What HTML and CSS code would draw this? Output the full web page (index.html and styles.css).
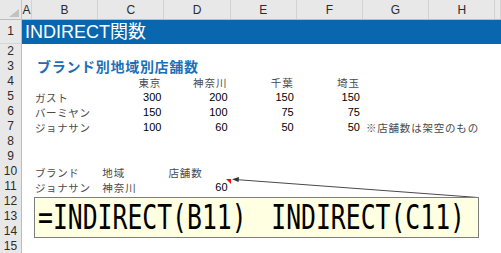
FILE: index.html
```html
<!DOCTYPE html>
<html lang="ja">
<head>
<meta charset="utf-8">
<title>INDIRECT関数</title>
<link rel="stylesheet" href="styles.css">
</head>
<body>
<div class="sheet">
  <div class="row colhead">
    <div class="corner"></div>
    <div class="ch">A</div><div class="ch">B</div><div class="ch">C</div><div class="ch">D</div>
    <div class="ch">E</div><div class="ch">F</div><div class="ch">G</div><div class="ch">H</div><div class="ch"></div>
  </div>
  <div class="row r1">
    <div class="rh">1</div>
    <div class="band"><span class="title">INDIRECT関数</span></div>
  </div>
  <div class="row"><div class="rh">2</div></div>
  <div class="row"><div class="rh">3</div><div></div><div class="c sub">ブランド別地域別店舗数</div></div>
  <div class="row"><div class="rh">4</div><div></div><div></div>
    <div class="c r jp">東京</div><div class="c r jp">神奈川</div><div class="c r jp">千葉</div><div class="c r jp">埼玉</div></div>
  <div class="row"><div class="rh">5</div><div></div><div class="c jp kana">ガスト</div>
    <div class="c r n">300</div><div class="c r n">200</div><div class="c r n">150</div><div class="c r n">150</div></div>
  <div class="row"><div class="rh">6</div><div></div><div class="c jp kana">バーミヤン</div>
    <div class="c r n">150</div><div class="c r n">100</div><div class="c r n">75</div><div class="c r n">75</div></div>
  <div class="row"><div class="rh">7</div><div></div><div class="c jp kana">ジョナサン</div>
    <div class="c r n">100</div><div class="c r n">60</div><div class="c r n">50</div><div class="c r n">50</div>
    <div class="c jp note">※店舗数は架空のもの</div></div>
  <div class="row"><div class="rh">8</div></div>
  <div class="row"><div class="rh">9</div></div>
  <div class="row"><div class="rh">10</div><div></div><div class="c jp kana">ブランド</div>
    <div class="c jp">地域</div><div class="c jp">店舗数</div></div>
  <div class="row"><div class="rh">11</div><div></div><div class="c jp kana">ジョナサン</div>
    <div class="c jp">神奈川</div><div class="c r n commented">60</div></div>
  <div class="row"><div class="rh">12</div></div>
  <div class="row"><div class="rh">13</div></div>
  <div class="row"><div class="rh">14</div></div>
  <div class="row"><div class="rh">15</div></div>

  <svg class="leader" width="501" height="253" viewBox="0 0 501 253">
    <line x1="235" y1="179.5" x2="478" y2="197.5" stroke="#4a4a4a" stroke-width="1"/>
    <polygon points="232,179.3 239,177 238.6,182" fill="#333"/>
  </svg>
  <div class="callout"><span class="formula">=INDIRECT(B11) INDIRECT(C11)</span></div>
</div>
</body>
</html>
```
FILE: styles.css
```css
html, body {
  margin: 0;
  padding: 0;
  background: #ffffff;
}
.sheet {
  --cols: 22px 10px repeat(7, 66.2px) 1fr;
  position: relative;
  width: 501px;
  height: 253px;
  overflow: hidden;
  font-family: "Liberation Sans", Arial, "Noto Sans CJK JP", sans-serif;
  font-size: 11px;
  line-height: 15px;
  color: #000;
}
.row {
  display: grid;
  grid-template-columns: var(--cols);
  height: 15px;
  white-space: nowrap;
}
.colhead {
  height: 20px;
  background: #e8e8e8;
  border-bottom: 1px solid #bcbcbc;
  box-sizing: border-box;
}
.corner {
  position: relative;
  border-right: 1px solid #c4c4c4;
}
.corner::after {
  content: "";
  position: absolute;
  right: 2px;
  bottom: 2px;
  width: 0;
  height: 0;
  border-left: 10px solid transparent;
  border-bottom: 8px solid #c2c2c2;
}
.ch {
  display: flex;
  align-items: center;
  justify-content: center;
  border-right: 1px solid #d2d2d2;
  font-size: 12px;
  color: #2b2b2b;
  padding-top: 1px;
}
.rh {
  background: #e8e8e8;
  border-right: 1px solid #bcbcbc;
  border-bottom: 1px solid #d6d6d6;
  box-sizing: border-box;
  display: flex;
  align-items: center;
  justify-content: center;
  font-size: 12px;
  color: #2b2b2b;
}
.r1 {
  height: 24px;
}
.band {
  grid-column: 2 / -1;
  background: #0867af;
  display: flex;
  align-items: center;
  padding-left: 3px;
}
.title {
  color: #ffffff;
  font-size: 18px;
  line-height: 24px;
  font-family: "Liberation Sans", Arial, "Noto Sans CJK JP", sans-serif;
}
.c {
  display: flex;
  align-items: center;
  padding: 0 3px 0 4px;
  overflow: visible;
}
.r {
  justify-content: flex-end;
  padding: 0 3px 0 0;
}
.sub {
  color: #1c6fb7;
  font-weight: bold;
  font-size: 14px;
  line-height: 13px;
  letter-spacing: 0.7px;
  padding-left: 5px;
  align-items: flex-start;
  padding-top: 1px;
  font-family: "Noto Sans CJK JP", sans-serif;
}
.jp {
  font-family: "Noto Sans CJK JP", sans-serif;
  color: #4a4a4a;
  font-size: 10.5px;
  line-height: 11px;
  letter-spacing: 1px;
}
.kana {
  letter-spacing: 0.6px;
  padding-left: 3px;
}
.n {
  color: #000;
}
.note {
  padding-left: 3px;
  letter-spacing: 0.8px;
}
.commented {
  position: relative;
}
.commented::after {
  content: "";
  position: absolute;
  top: 0;
  right: 0;
  width: 0;
  height: 0;
  border-top: 5px solid #ee1111;
  border-left: 5px solid transparent;
}
.leader {
  position: absolute;
  left: 0;
  top: 0;
  pointer-events: none;
}
.callout {
  position: absolute;
  left: 34px;
  top: 197px;
  width: 445px;
  height: 41px;
  box-sizing: border-box;
  background: #ffffe1;
  border: 1px solid #7d7d7d;
  display: flex;
  align-items: center;
  padding-left: 3px;
}
.formula {
  display: inline-block;
  font-family: "DejaVu Sans Mono", "Liberation Mono", monospace;
  font-size: 33px;
  line-height: 38px;
  white-space: pre;
  word-spacing: 13px;
  transform: scaleX(0.75);
  transform-origin: left center;
  color: #000;
}
```
